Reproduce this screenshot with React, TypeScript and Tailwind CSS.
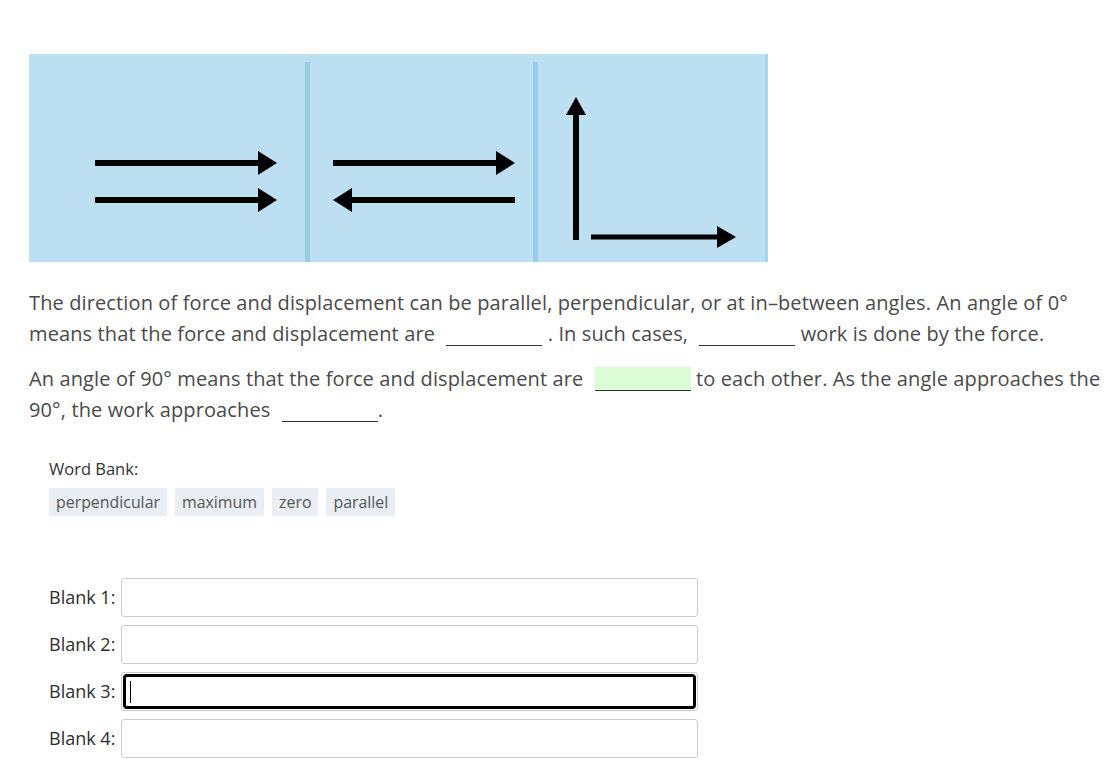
import React from 'react';

const Blank = ({ filled }: { filled?: boolean }) => (
  <span
    className={`inline-block w-[96px] h-[24px] align-[-5px] ml-[6px] border-b border-[#333] ${filled ? 'bg-[#dcfcd6]' : ''}`}
  />
);

const Diagram = () => {
  const shaft = 'stroke-black';
  return (
    <div className="w-[739px] h-[208px] bg-[#bcdff2]">
      <svg width="739" height="208" viewBox="0 0 739 208">
        {/* dividers */}
        <rect x="276" y="8" width="5" height="200" fill="#98cde4" />
        <rect x="504" y="8" width="5" height="200" fill="#98cde4" />
        <rect x="736" y="0" width="3" height="208" fill="#a7d5ea" />
        {/* panel 1 */}
        <line x1="66" y1="109" x2="232" y2="109" className={shaft} strokeWidth="6" />
        <polygon points="229,97 248,109 229,121" fill="black" />
        <line x1="66" y1="146" x2="232" y2="146" className={shaft} strokeWidth="6" />
        <polygon points="229,134 248,146 229,158" fill="black" />
        {/* panel 2 */}
        <line x1="304" y1="109" x2="470" y2="109" className={shaft} strokeWidth="6" />
        <polygon points="467,97 486,109 467,121" fill="black" />
        <line x1="320" y1="146" x2="486" y2="146" className={shaft} strokeWidth="6" />
        <polygon points="323,134 304,146 323,158" fill="black" />
        {/* panel 3 */}
        <line x1="547" y1="186" x2="547" y2="58" className={shaft} strokeWidth="6" />
        <polygon points="537,61 547,43 557,61" fill="black" />
        <line x1="562" y1="183" x2="690" y2="183" className={shaft} strokeWidth="5" />
        <polygon points="688,172 707,183 688,194" fill="black" />
      </svg>
    </div>
  );
};

export default function App() {
  const words = ['perpendicular', 'maximum', 'zero', 'parallel'];
  return (
    <div className="bg-white min-h-[765px] pt-[54px] pl-[29px] pr-[6px] font-['Open_Sans',sans-serif] text-[#4a4a4a]">
      <Diagram />
      <p className="mt-[25px] text-[20px] leading-[31px] tracking-[0.12px]">
        The direction of force and displacement can be parallel, perpendicular, or at in–between angles. An angle of 0°
        means that the force and displacement are <Blank /> . In such cases, <Blank /> work is done by the force.
      </p>
      <p className="mt-[14px] text-[20px] leading-[31px] tracking-[0.12px]">
        An angle of 90° means that the force and displacement are <Blank filled /> to each other. As the angle approaches the
        90°, the work approaches <Blank />.
      </p>
      <div className="ml-[20px] mt-[34px]">
        <div className="text-[16.5px] text-[#333] leading-[20px]">Word Bank:</div>
        <div className="flex gap-[8px] mt-[9px]">
          {words.map((w) => (
            <span key={w} className="bg-[#e8eef3] px-[7px] h-[28px] leading-[28px] text-[15.9px] text-[#555]">
              {w}
            </span>
          ))}
        </div>
        <div className="mt-[62px] flex flex-col gap-[8px]">
          {[1, 2, 3, 4].map((n) => (
            <div key={n} className="flex items-center gap-[5px]">
              <label className="text-[18px] text-[#2e2e2e] w-[67px] whitespace-nowrap">Blank {n}:</label>
              {n === 3 ? (
                <div className="w-[577px] h-[39px] rounded-[3px] border border-[#ccc] p-[1px]">
                  <div className="w-full h-full rounded-[4px] border-[3px] border-black flex items-center pl-[4px]">
                    <span className="w-px h-[22px] bg-black" />
                  </div>
                </div>
              ) : (
                <input className="w-[577px] h-[39px] rounded-[3px] border border-[#ccc] outline-none" />
              )}
            </div>
          ))}
        </div>
      </div>
    </div>
  );
}
